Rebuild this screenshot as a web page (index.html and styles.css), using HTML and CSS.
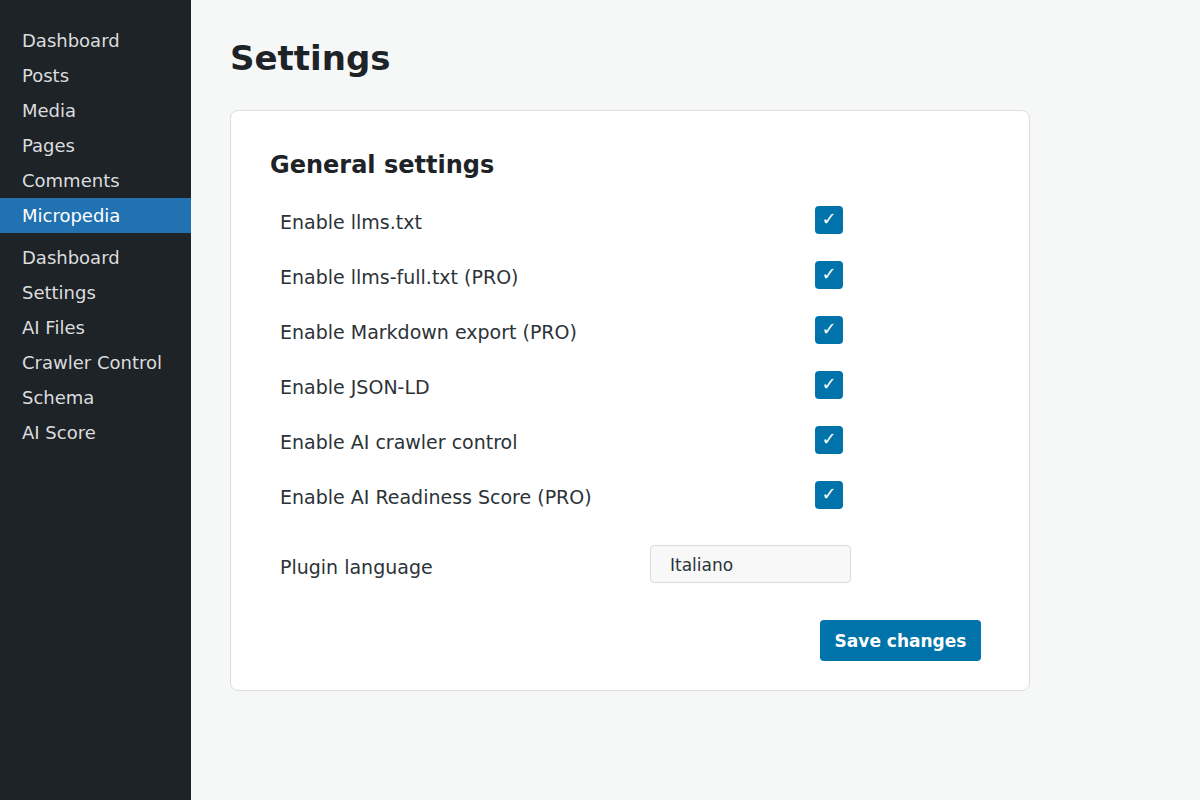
FILE: index.html
```html
<!DOCTYPE html>
<html lang="en">
<head>
<meta charset="utf-8">
<title>Settings</title>
<link rel="stylesheet" href="styles.css">
</head>
<body>
<div class="layout">
  <nav class="sidebar">
    <ul class="menu">
      <li class="menu-item">Dashboard</li>
      <li class="menu-item">Posts</li>
      <li class="menu-item">Media</li>
      <li class="menu-item">Pages</li>
      <li class="menu-item">Comments</li>
      <li class="menu-item active">Micropedia</li>
    </ul>
    <ul class="submenu">
      <li class="menu-item">Dashboard</li>
      <li class="menu-item">Settings</li>
      <li class="menu-item">AI Files</li>
      <li class="menu-item">Crawler Control</li>
      <li class="menu-item">Schema</li>
      <li class="menu-item">AI Score</li>
    </ul>
  </nav>
  <main class="main">
    <h1 class="page-title">Settings</h1>
    <section class="card">
      <h2 class="card-title">General settings</h2>
      <div class="rows">
        <div class="row"><span class="label">Enable llms.txt</span><span class="check">✓</span></div>
        <div class="row"><span class="label">Enable llms-full.txt (PRO)</span><span class="check">✓</span></div>
        <div class="row"><span class="label">Enable Markdown export (PRO)</span><span class="check">✓</span></div>
        <div class="row"><span class="label">Enable JSON-LD</span><span class="check">✓</span></div>
        <div class="row"><span class="label">Enable AI crawler control</span><span class="check">✓</span></div>
        <div class="row"><span class="label">Enable AI Readiness Score (PRO)</span><span class="check">✓</span></div>
      </div>
      <div class="lang-row">
        <span class="label">Plugin language</span>
        <div class="select">Italiano</div>
      </div>
      <div class="actions">
        <button class="btn" type="button">Save changes</button>
      </div>
    </section>
  </main>
</div>
</body>
</html>
```

FILE: styles.css
```css
* { box-sizing: border-box; }
html, body { margin: 0; padding: 0; height: 100%; }
body {
  font-family: "DejaVu Sans", sans-serif;
  background: #f6f7f7;
  color: #1d2327;
}
.layout {
  display: flex;
  min-height: 800px;
}
.sidebar {
  width: 191px;
  flex: none;
  background: #1d2327;
  padding-top: 23px;
}
.menu, .submenu {
  list-style: none;
  margin: 0;
  padding: 0;
}
.submenu { padding-top: 7px; }
.menu-item {
  height: 35px;
  line-height: 35px;
  padding-left: 22px;
  font-size: 18px;
  color: #dcdcde;
}
.menu-item.active {
  background: #2271b1;
  color: #fff;
}
.main {
  flex: 1;
  padding: 36px 39px;
}
.page-title {
  margin: 0 0 30px;
  font-size: 34px;
  line-height: 44px;
  font-weight: bold;
  color: #1d2327;
}
.card {
  width: 800px;
  background: #fff;
  border: 1px solid #dcdcde;
  border-radius: 8px;
  padding: 39px 39px 29px;
}
.card-title {
  margin: 0 0 12px;
  font-size: 24px;
  line-height: 30px;
  font-weight: bold;
  color: #1d2327;
}
.rows { display: flex; flex-direction: column; }
.row {
  display: grid;
  grid-template-columns: 535px 28px;
  align-items: center;
  height: 55px;
  padding-left: 10px;
}
.label {
  font-size: 19px;
  color: #2c3338;
  padding-top: 4px;
}
.check {
  width: 28px;
  height: 28px;
  border-radius: 4px;
  background: #0073aa;
  color: #fff;
  font-size: 18px;
  line-height: 26px;
  text-align: center;
}
.lang-row {
  display: grid;
  grid-template-columns: 370px 201px;
  align-items: center;
  padding-left: 10px;
  margin-top: 23px;
}
.lang-row .label { padding-top: 6px; }
.select {
  height: 38px;
  line-height: 34px;
  padding-top: 2px;
  border: 1px solid #dcdcde;
  border-radius: 4px;
  background: #f8f8f8;
  padding-left: 19px;
  font-size: 17px;
  color: #2c3338;
}
.actions {
  display: flex;
  justify-content: flex-end;
  padding-right: 9px;
  margin-top: 37px;
}
.btn {
  font-family: "DejaVu Sans", sans-serif;
  width: 161px;
  height: 41px;
  border: 0;
  border-radius: 4px;
  background: #0073aa;
  color: #fff;
  font-size: 17px;
  font-weight: bold;
  padding: 0;
}
```
